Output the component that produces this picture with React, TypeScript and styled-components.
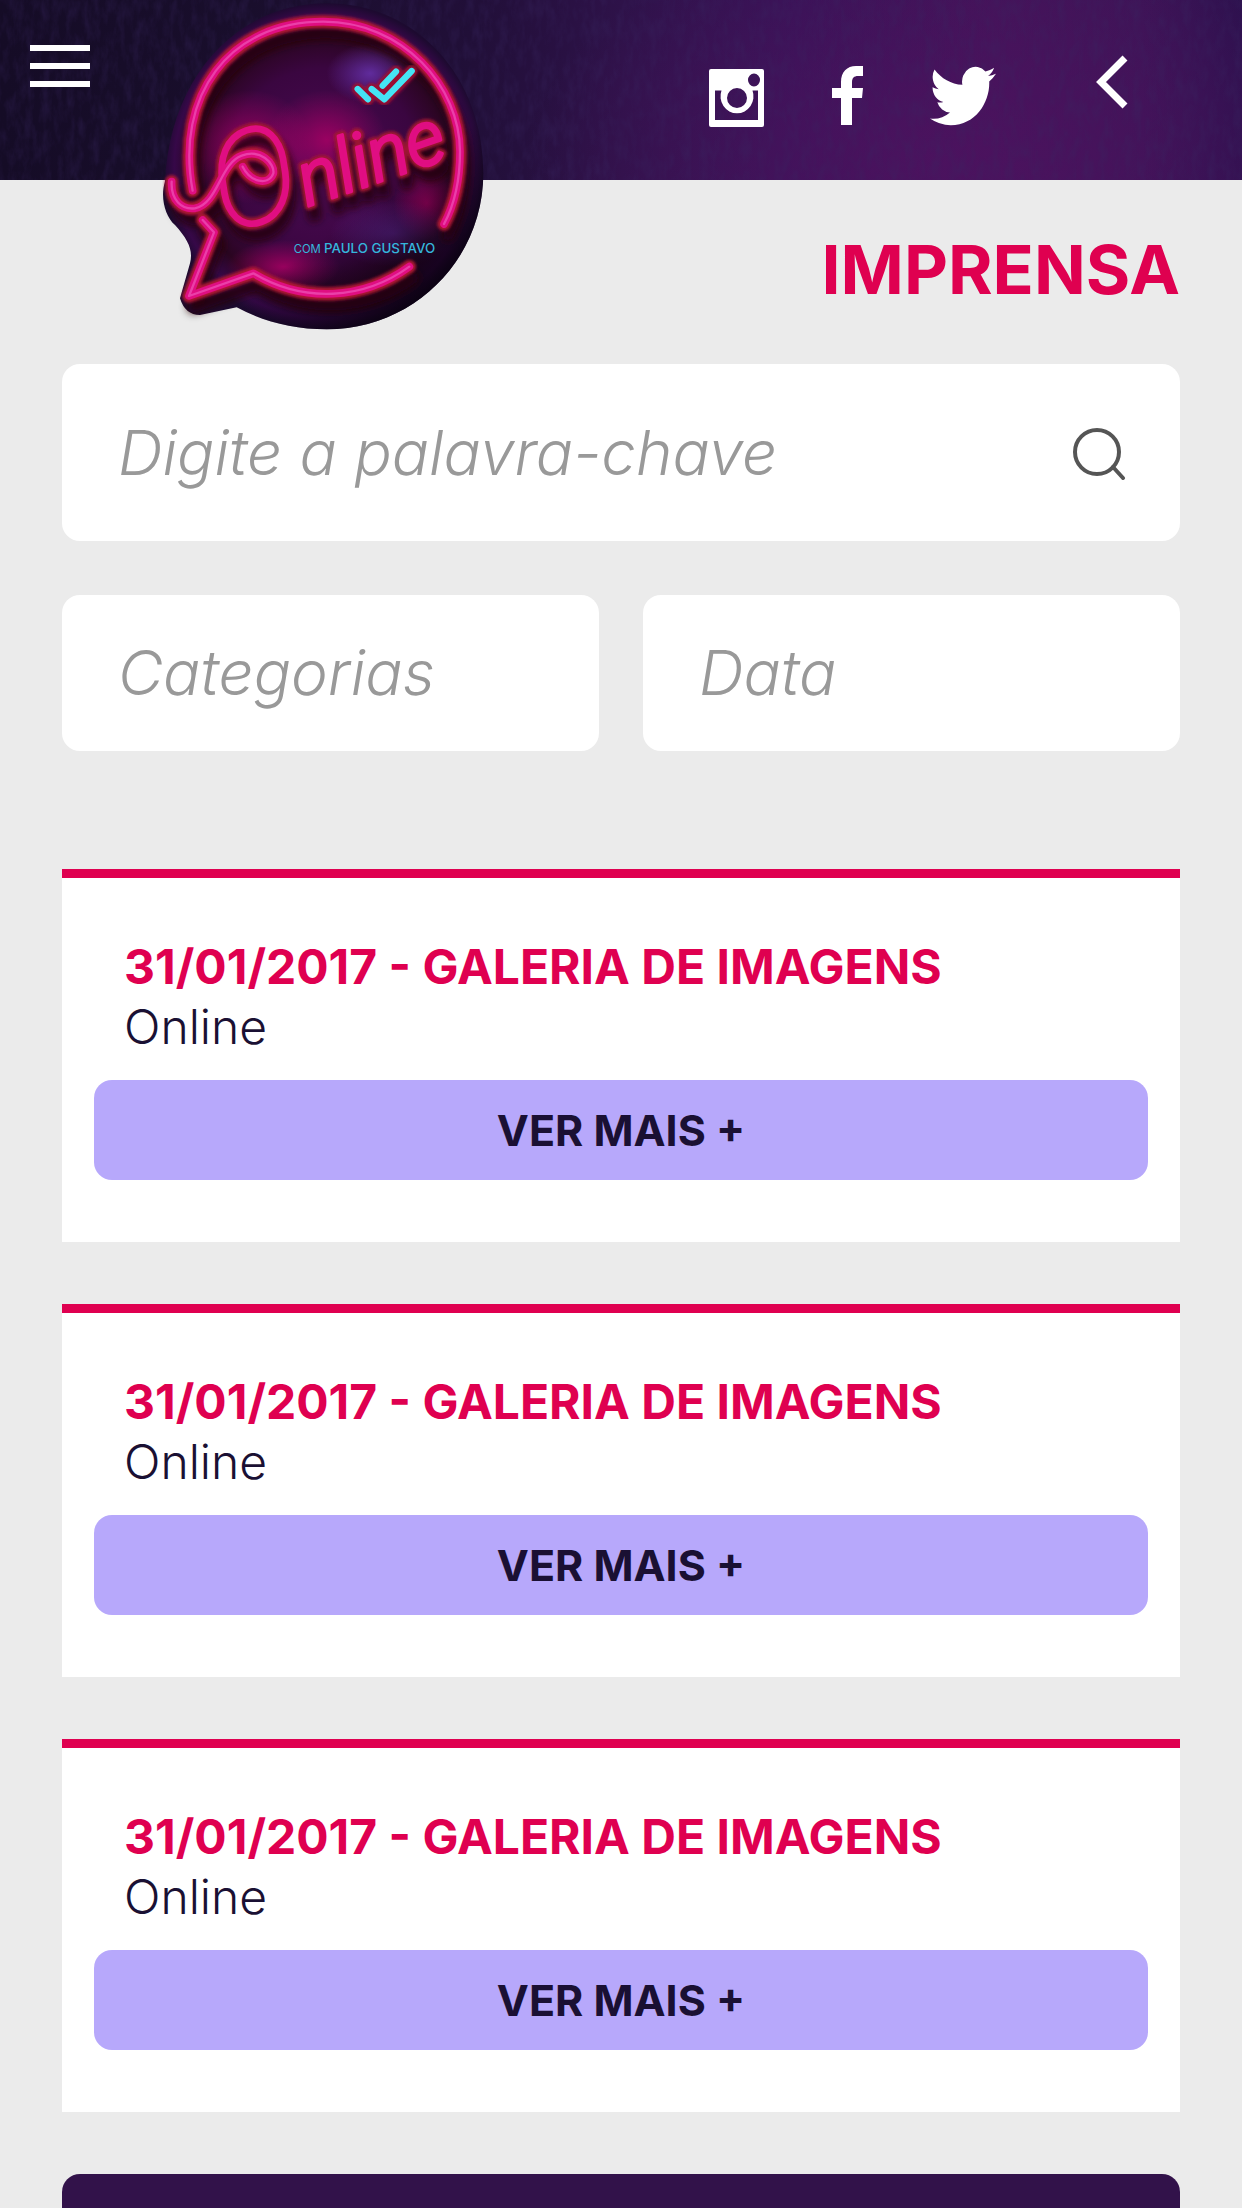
import React from "react";
import styled, { createGlobalStyle } from "styled-components";

const colors = {
  page: "#ebebeb",
  pink: "#df0050",
  ink: "#1a1033",
  lilac: "#b7a8fb",
  plum: "#32124a",
  hint: "#999999",
};

const GlobalStyle = createGlobalStyle`
  *, *::before, *::after { box-sizing: border-box; }
  body {
    margin: 0;
    background: ${colors.page};
    color: ${colors.ink};
    font-family: Inter, "Liberation Sans", sans-serif;
  }
  button, input, select { font: inherit; }
`;

const Page = styled.div`
  display: flex;
  flex-direction: column;
  min-height: 100vh;
`;

const Header = styled.header`
  position: relative;
  display: flex;
  align-items: flex-start;
  justify-content: space-between;
  height: 180px;
  padding: 0 114px 0 30px;
  background:
    radial-gradient(ellipse 420px 240px at 76% 90%, rgba(78, 18, 96, 0.8), rgba(78, 18, 96, 0) 100%),
    linear-gradient(90deg, #150c26 0%, #190e2c 20%, #210f38 38%, #2e1249 50%, #381357 64%, #421459 80%, #3c1456 92%, #2d114e 100%);
`;

const Texture = styled.svg`
  position: absolute;
  inset: 0;
  width: 100%;
  height: 100%;
  pointer-events: none;
`;

const IconButton = styled.button<{ $top: number }>`
  position: relative;
  display: flex;
  margin: ${(p) => p.$top}px 0 0;
  padding: 0;
  border: 0;
  background: none;
  color: #fff;
  cursor: pointer;
`;

const HeaderActions = styled.div`
  display: flex;
  align-items: flex-start;
  gap: 100px;
`;

const SocialNav = styled.nav`
  position: relative;
  display: flex;
  align-items: flex-start;
  gap: 66px;
  margin-top: 66px;
`;

const SocialLink = styled.a`
  display: flex;
  color: #fff;
`;

const LogoLink = styled.a`
  position: absolute;
  top: 0;
  left: 140px;
  z-index: 1;
  display: block;
  width: 360px;
  height: 340px;
`;

const Main = styled.main`
  display: flex;
  flex: 1;
  flex-direction: column;
  padding: 0 62px;
`;

const Title = styled.h1`
  margin: 49px 0 55px;
  color: ${colors.pink};
  font-size: 68px;
  font-weight: 700;
  line-height: 80px;
  text-align: right;
`;

const Filters = styled.form`
  display: flex;
  flex-direction: column;
  gap: 54px;
  margin-bottom: 118px;
`;

const SearchBox = styled.div`
  display: flex;
  align-items: center;
  height: 177px;
  padding: 0 52px 0 0;
  border-radius: 18px;
  background: #fff;
`;

const FilterRow = styled.div`
  display: grid;
  grid-template-columns: repeat(2, minmax(0, 1fr));
  gap: 44px;
`;

const FieldLabel = styled.label`
  display: flex;
  flex: 1;
  align-items: center;
  min-width: 0;
  padding-left: 56px;
`;

const FilterLabel = styled(FieldLabel)`
  height: 156px;
  padding-right: 56px;
  border-radius: 18px;
  background: #fff;
`;

const fieldText = `
  width: 100%;
  min-width: 0;
  height: 80px;
  padding: 0;
  border: 0;
  outline: 0;
  background: transparent;
  color: ${colors.hint};
  font-size: 62px;
  font-style: italic;
  font-weight: 300;
  line-height: 80px;
`;

const TextField = styled.input`
  ${fieldText}
  &::placeholder { color: ${colors.hint}; opacity: 1; }
`;

const SelectField = styled.select`
  ${fieldText}
  appearance: none;
`;

const SearchButton = styled.button`
  display: flex;
  padding: 0;
  border: 0;
  background: none;
  color: #555;
  cursor: pointer;
`;

const CardList = styled.div`
  display: flex;
  flex-direction: column;
  gap: 62px;
  margin-bottom: 62px;
`;

const Card = styled.article`
  padding: 59px 32px 62px;
  border-top: 9px solid ${colors.pink};
  background: #fff;
`;

const CardTitle = styled.h2`
  margin: 0 30px;
  color: ${colors.pink};
  font-size: 48px;
  font-weight: 700;
  line-height: 60px;
`;

const CardText = styled.p`
  margin: 0 30px 23px;
  font-size: 48px;
  font-weight: 300;
  line-height: 60px;
`;

const MoreButton = styled.button`
  display: block;
  width: 100%;
  height: 100px;
  padding: 0;
  border: 0;
  border-radius: 18px;
  background: ${colors.lilac};
  color: ${colors.ink};
  font-size: 43px;
  font-weight: 700;
  line-height: 60px;
  cursor: pointer;
`;

const BottomPanel = styled.footer`
  flex: 1;
  border-radius: 18px 18px 0 0;
  background: ${colors.plum};
`;

const bubble = "M75 545 C60 590 75 650 105 675 C145 720 160 750 150 790 L120 895 Q135 945 180 945 L290 922 C370 965 460 988 560 988 C820 988 1030 780 1030 520 C1030 230 830 10 560 10 C290 10 90 230 75 545Z";
const swash = "M95 545 C92 600 125 630 165 625 C235 610 240 490 305 467 C360 445 405 490 400 520 C385 560 330 545 308 500";
const ring = "M158 572 C105 290 265 65 550 65 C790 65 960 260 960 455 C960 540 945 610 912 672";
const tail = "M188 660 L222 697 L147 888 L340 820 C490 910 670 900 808 800";
const ticks = "M653 267 L684 298 M695 267 L733 298 L815 213 M728 257 L768 215";

function Tubes() {
  return (
    <>
      <path d={ring} />
      <path d={tail} />
      <path d={swash} />
    </>
  );
}

function Lettering({ color, width }: { color: string; width: number }) {
  return (
    <text
      transform="rotate(-19 250 700)"
      x="262"
      y="706"
      fill={color}
      stroke={color}
      strokeWidth={width}
      strokeLinejoin="round"
      fontFamily="Roboto, sans-serif"
      fontStyle="italic"
    >
      <tspan fontSize="390" fontWeight="100">O</tspan>
      <tspan fontSize="226" fontWeight="300">nline</tspan>
    </text>
  );
}

function Logo() {
  return (
    <svg width="360" height="340" viewBox="0 0 1080 1020" role="img" aria-label="Online com Paulo Gustavo">
      <defs>
        <radialGradient id="disc" cx="0.5" cy="0.5" r="0.5">
          <stop offset="0" stopColor="#4c0a55" />
          <stop offset="0.6" stopColor="#3a0640" />
          <stop offset="0.8" stopColor="#2a0520" />
          <stop offset="0.93" stopColor="#360848" />
          <stop offset="1" stopColor="#1d0a30" />
        </radialGradient>
        <radialGradient id="magenta">
          <stop offset="0" stopColor="#a80064" stopOpacity="0.85" />
          <stop offset="1" stopColor="#a80064" stopOpacity="0" />
        </radialGradient>
        <radialGradient id="violet">
          <stop offset="0" stopColor="#6a35b5" stopOpacity="0.8" />
          <stop offset="1" stopColor="#6a35b5" stopOpacity="0" />
        </radialGradient>
        <linearGradient id="shade" x1="0.3" y1="0.4" x2="0.75" y2="1">
          <stop offset="0.5" stopColor="#08000c" stopOpacity="0" />
          <stop offset="1" stopColor="#08000c" stopOpacity="0.9" />
        </linearGradient>
        <filter id="soft" x="-20%" y="-20%" width="140%" height="140%">
          <feGaussianBlur stdDeviation="12" />
        </filter>
        <filter id="glow" x="-20%" y="-20%" width="140%" height="140%">
          <feGaussianBlur stdDeviation="5" />
        </filter>
      </defs>
      <path d={bubble} fill="url(#disc)" />
      <ellipse cx="330" cy="440" rx="190" ry="170" fill="url(#magenta)" />
      <ellipse cx="560" cy="420" rx="180" ry="150" fill="url(#magenta)" />
      <ellipse cx="860" cy="610" rx="100" ry="110" fill="url(#magenta)" />
      <ellipse cx="430" cy="800" rx="170" ry="80" fill="url(#magenta)" />
      <ellipse cx="690" cy="220" rx="130" ry="90" fill="url(#violet)" />
      <ellipse cx="760" cy="700" rx="190" ry="100" fill="url(#violet)" opacity="0.6" />
      <path d={bubble} fill="url(#shade)" />
      <g fill="none" strokeLinecap="round" strokeLinejoin="round">
        <g stroke="#250007" strokeWidth="34" filter="url(#soft)" transform="translate(12 34)">
          <Tubes />
          <Lettering color="#250007" width={24} />
        </g>
        <g stroke="#b01434" strokeWidth="40" filter="url(#glow)">
          <Tubes />
        </g>
        <g filter="url(#glow)">
          <Lettering color="#a01233" width={26} />
        </g>
        <g stroke="#e00e82" strokeWidth="23">
          <Tubes />
          <Lettering color="#e00e82" width={10} />
        </g>
        <g stroke="#ea3fa8" strokeWidth="7">
          <Tubes />
        </g>
        <g stroke="#9a1030" strokeWidth="36" filter="url(#glow)">
          <path d={ticks} />
        </g>
        <path d={ticks} stroke="#45e4f4" strokeWidth="19" />
      </g>
      <text x="461" y="760" fill="#35b6dc" fontFamily="Inter, sans-serif">
        <tspan fontSize="34">COM </tspan>
        <tspan fontSize="40" fontWeight="500">PAULO GUSTAVO</tspan>
      </text>
    </svg>
  );
}

function MenuIcon() {
  return (
    <svg width="60" height="42" viewBox="0 0 60 42" fill="currentColor" aria-hidden="true">
      <path d="M0 0H60V6H0ZM0 18H60V24H0ZM0 36H60V42H0Z" />
    </svg>
  );
}

function InstagramIcon() {
  return (
    <svg width="58" height="64" viewBox="0 -2 58 64" fill="currentColor" fillRule="evenodd" aria-hidden="true">
      <path d="M3 1H54Q56 1 56 3V57Q56 59 54 59H3Q1 59 1 57V3Q1 1 3 1ZM46 5.500A6 6.500 0 1 0 46 18.500A6 6.500 0 1 0 46 5.500ZM7 22.500V52H50V22.500H44.500A16.500 17 0 1 1 13.500 22.500ZM29 20A10 10 0 1 0 29 40A10 10 0 1 0 29 20Z" />
    </svg>
  );
}

function FacebookIcon() {
  return (
    <svg width="32" height="60" viewBox="0 0 32 60" fill="currentColor" aria-hidden="true">
      <path d="M9 59V32H0V22H9V16C9 6 15 0 24 0H31V10H26C22 10 20 12 20 16V22H31L30 32H20V59Z" />
    </svg>
  );
}

function TwitterIcon() {
  return (
    <svg width="66" height="60" viewBox="0 2 24 20" preserveAspectRatio="none" fill="currentColor" aria-hidden="true">
      <path d="M23.950 4.570a10 10 0 0 1-2.820.770 4.960 4.960 0 0 0 2.160-2.720c-.950.550-2 .950-3.130 1.180a4.920 4.920 0 0 0-8.380 4.480C7.690 8.090 4.070 6.130 1.640 3.160a4.920 4.920 0 0 0 1.520 6.570 4.900 4.900 0 0 1-2.230-.610v.060c0 2.390 1.710 4.380 3.950 4.830a5 5 0 0 1-2.210.080 4.940 4.940 0 0 0 4.600 3.420A9.870 9.870 0 0 1 0 19.540a13.990 13.990 0 0 0 7.550 2.210c9.050 0 14-7.500 14-13.980 0-.210 0-.420-.020-.630a9.940 9.940 0 0 0 2.460-2.550z" />
    </svg>
  );
}

function BackIcon() {
  return (
    <svg width="32" height="54" viewBox="0 0 32 54" fill="none" stroke="currentColor" strokeWidth="7" aria-hidden="true">
      <path d="M29 3L5 27L29 51" />
    </svg>
  );
}

function SearchIcon() {
  return (
    <svg width="56" height="54" viewBox="0 0 56 54" fill="none" stroke="currentColor" strokeWidth="4" strokeLinecap="round" aria-hidden="true">
      <circle cx="25" cy="26" r="22" />
      <path d="M41 41L51 52" />
    </svg>
  );
}

const releases = [
  { id: 1, date: "31/01/2017", title: "GALERIA DE IMAGENS", show: "Online" },
  { id: 2, date: "31/01/2017", title: "GALERIA DE IMAGENS", show: "Online" },
  { id: 3, date: "31/01/2017", title: "GALERIA DE IMAGENS", show: "Online" },
];

export default function App() {
  return (
    <Page>
      <GlobalStyle />
      <Header>
        <Texture aria-hidden="true">
          <filter id="grain" x="0" y="0" width="100%" height="100%">
            <feTurbulence type="fractalNoise" baseFrequency="0.12 0.05" numOctaves={4} seed={7} />
            <feColorMatrix values="0 0 0 0 0.04  0 0 0 0 0.02  0 0 0 0 0.12  0 1.600 0 0 -0.600" />
          </filter>
          <rect width="100%" height="100%" filter="url(#grain)" opacity="0.4" />
        </Texture>
        <IconButton type="button" aria-label="Menu" $top={45}>
          <MenuIcon />
        </IconButton>
        <HeaderActions>
          <SocialNav aria-label="Redes sociais">
            <SocialLink href="#instagram" aria-label="Instagram"><InstagramIcon /></SocialLink>
            <SocialLink href="#facebook" aria-label="Facebook"><FacebookIcon /></SocialLink>
            <SocialLink href="#twitter" aria-label="Twitter"><TwitterIcon /></SocialLink>
          </SocialNav>
          <IconButton type="button" aria-label="Voltar" $top={55}>
            <BackIcon />
          </IconButton>
        </HeaderActions>
        <LogoLink href="#inicio"><Logo /></LogoLink>
      </Header>
      <Main>
        <Title>IMPRENSA</Title>
        <Filters onSubmit={(e) => e.preventDefault()}>
          <SearchBox>
            <FieldLabel htmlFor="keyword">
              <TextField id="keyword" type="text" aria-label="Palavra-chave" placeholder="Digite a palavra-chave" />
            </FieldLabel>
            <SearchButton type="submit" aria-label="Buscar"><SearchIcon /></SearchButton>
          </SearchBox>
          <FilterRow>
            <FilterLabel htmlFor="category">
              <SelectField id="category" aria-label="Categorias" defaultValue="">
                <option value="">Categorias</option>
              </SelectField>
            </FilterLabel>
            <FilterLabel htmlFor="date">
              <TextField id="date" type="text" aria-label="Data" placeholder="Data" />
            </FilterLabel>
          </FilterRow>
        </Filters>
        <CardList>
          {releases.map((r) => (
            <Card key={r.id}>
              <CardTitle>{r.date} - {r.title}</CardTitle>
              <CardText>{r.show}</CardText>
              <MoreButton type="button">VER MAIS +</MoreButton>
            </Card>
          ))}
        </CardList>
        <BottomPanel />
      </Main>
    </Page>
  );
}
